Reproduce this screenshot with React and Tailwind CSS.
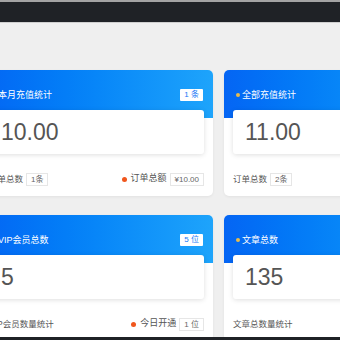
import React from 'react';

const font = { fontFamily: '"Liberation Sans", "Noto Sans CJK SC", sans-serif' };

function StatCard({ title, badge, value, left, right }) {
    return (
        <div className="w-full h-[126px] bg-white rounded-[5px] shadow-[0_1px_3px_rgba(0,0,0,0.06)] overflow-hidden flex flex-col">
            <div className="h-[48px] shrink-0 bg-gradient-to-r from-[#0565f4] to-[#1ea4fb] px-[10px] pt-[19px] flex items-start justify-between">
                <div className="flex items-center h-[12px]">
                    <span className="w-[4px] h-[4px] rounded-full bg-[#e9bb4c] ml-[2px] mr-[2px]" />
                    <span className="text-[9px] leading-[12px] text-white">{title}</span>
                </div>
                {badge && (
                    <span className="h-[12px] px-[4px] bg-white rounded-[1px] text-[8px] leading-[12px] text-[#1677f6]">{badge}</span>
                )}
            </div>
            <div className="relative mx-[9px] mt-[-8px] h-[44px] shrink-0 bg-white rounded-[3px] shadow-[0_1px_5px_rgba(0,0,0,0.13)] flex items-center pl-[12px]">
                <span className="text-[23px] text-[#555]">{value}</span>
            </div>
            <div className="flex-1 px-[9px] pt-[8px] flex items-center justify-between">
                <div className="flex items-center gap-[3px]">
                    <span className="text-[8.5px] text-[#555]">{left.label}</span>
                    {left.badge && (
                        <span className="h-[13px] px-[4px] border border-[#e6e6e6] bg-white text-[8px] leading-[11px] text-[#666]">{left.badge}</span>
                    )}
                </div>
                {right && (
                    <div className="flex items-center gap-[3px]">
                        <span className="w-[5px] h-[5px] rounded-full bg-[#f0561d] mr-[1px]" />
                        <span className="text-[9px] text-[#555]">{right.label}</span>
                        <span className="h-[13px] px-[4px] border border-[#e6e6e6] bg-white text-[8px] leading-[11px] text-[#666]">{right.badge}</span>
                    </div>
                )}
            </div>
        </div>
    );
}

export default function App() {
    const cards = [
        { title: '本月充值统计', badge: '1 条', value: '10.00', left: { label: '订单总数', badge: '1条' }, right: { label: '订单总额', badge: '¥10.00' } },
        { title: '全部充值统计', value: '11.00', left: { label: '订单总数', badge: '2条' } },
        { title: 'VIP会员总数', badge: '5 位', value: '5', left: { label: 'VIP会员数量统计' }, right: { label: '今日开通', badge: '1 位' } },
        { title: '文章总数', value: '135', left: { label: '文章总数量统计' } },
    ];

    return (
        <div className="relative w-[340px] h-[340px] overflow-hidden bg-[#efefef]" style={font}>
            <div className="h-[2px] bg-[#a3a3a3]" />
            <div className="h-[20px] bg-[#1f2226]" />
            <div className="h-[1px] bg-[#cfcfcf]" />

            <div className="ml-[-20px] mt-[47px] grid grid-cols-[233px_233px] gap-x-[11px] gap-y-[19px]">
                {cards.map((card, index) => (
                    <StatCard key={index} {...card} />
                ))}
            </div>

            {/* bottom window edge */}
            <div className="absolute left-0 right-0 bottom-0 h-[3px] bg-[#1f2226]" />
        </div>
    );
}
